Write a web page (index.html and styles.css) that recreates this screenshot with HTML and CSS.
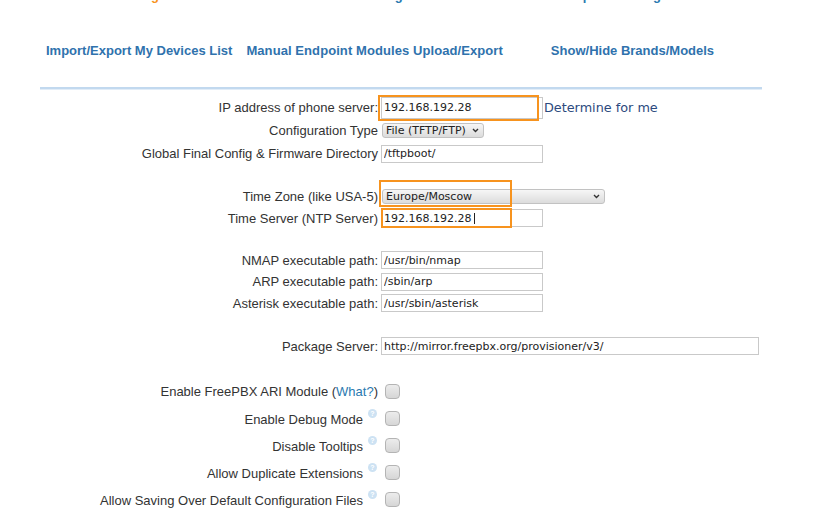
FILE: index.html
```html
<!DOCTYPE html>
<html>
<head>
<meta charset="utf-8">
<link rel="stylesheet" href="styles.css">
</head>
<body>
<div class="tabs">
  <span class="tab active t1">Settings</span>
  <span class="tab t2">Brand Manager</span>
  <span class="tab t3">Template Manager</span>
</div>
<div class="links">
  <a class="link l1">Import/Export My Devices List</a>
  <a class="link l2">Manual Endpoint Modules Upload/Export</a>
  <a class="link l3">Show/Hide Brands/Models</a>
</div>
<div class="rule"></div>
<div class="form">
  <div class="row r23">
    <label>IP address of phone server:</label>
    <div class="field">
      <input class="txt tall" value="192.168.192.28">
      <span class="mark m-ip"></span>
      <a class="determine">Determine for me</a>
    </div>
  </div>
  <div class="row r23">
    <label>Configuration Type</label>
    <div class="field">
      <div class="sel sel-small"><span>File (TFTP/FTP)</span><svg width="7" height="5" viewBox="0 0 7 5"><path d="M1 1 L3.5 3.5 L6 1" fill="none" stroke="#333" stroke-width="1.4"/></svg></div>
    </div>
  </div>
  <div class="row r23">
    <label>Global Final Config &amp; Firmware Directory</label>
    <div class="field"><input class="txt" value="/tftpboot/"></div>
  </div>
  <div class="spacer s20"></div>
  <div class="row">
    <label>Time Zone (like USA-5)</label>
    <div class="field">
      <div class="sel sel-wide"><span>Europe/Moscow</span><svg width="7" height="5" viewBox="0 0 7 5"><path d="M1 1 L3.5 3.5 L6 1" fill="none" stroke="#333" stroke-width="1.4"/></svg></div>
      <span class="mark m-tz"></span>
    </div>
  </div>
  <div class="row">
    <label>Time Server (NTP Server)</label>
    <div class="field">
      <input class="txt" value="192.168.192.28">
      <span class="caret"></span>
      <span class="mark m-ts"></span>
    </div>
  </div>
  <div class="spacer s20"></div>
  <div class="row">
    <label>NMAP executable path:</label>
    <div class="field"><input class="txt" value="/usr/bin/nmap"></div>
  </div>
  <div class="row r215">
    <label>ARP executable path:</label>
    <div class="field"><input class="txt" value="/sbin/arp"></div>
  </div>
  <div class="row r215">
    <label>Asterisk executable path:</label>
    <div class="field"><input class="txt" value="/usr/sbin/asterisk"></div>
  </div>
  <div class="spacer s21"></div>
  <div class="row">
    <label>Package Server:</label>
    <div class="field"><input class="txt long" value="http://mirror.freepbx.org/provisioner/v3/"></div>
  </div>
  <div class="spacer s205"></div>
  <div class="row cb">
    <label>Enable FreePBX ARI Module (<a class="what">What?</a>)</label>
    <div class="field"><span class="check"></span></div>
  </div>
  <div class="row cb">
    <label>Enable Debug Mode<span class="help">?</span></label>
    <div class="field"><span class="check"></span></div>
  </div>
  <div class="row cb">
    <label>Disable Tooltips<span class="help">?</span></label>
    <div class="field"><span class="check"></span></div>
  </div>
  <div class="row cb">
    <label>Allow Duplicate Extensions<span class="help">?</span></label>
    <div class="field"><span class="check"></span></div>
  </div>
  <div class="row cb">
    <label>Allow Saving Over Default Configuration Files<span class="help">?</span></label>
    <div class="field"><span class="check"></span></div>
  </div>
</div>
</body>
</html>
```
FILE: styles.css
```css
html, body {
  margin: 0;
  padding: 0;
  background: #fff;
  overflow: hidden;
}
body {
  font-family: "Liberation Sans", Arial, sans-serif;
  font-size: 13px;
  color: #333;
}

.tabs {
  display: flex;
  margin-top: -12px;
  height: 15px;
  line-height: 15px;
  font-weight: bold;
  font-size: 13px;
  color: #2a7ab0;
  white-space: nowrap;
}
.tab.active { color: #f7941d; }
.t1 { margin-left: 115px; }
.t2 { margin-left: 154px; }
.t3 { margin-left: 142px; word-spacing: 3px; }

.links {
  display: flex;
  margin-top: 40px;
  line-height: 15px;
  font-weight: bold;
  font-size: 13px;
  white-space: nowrap;
}
.link { color: #2f72ad; }
.l1 { margin-left: 46px; }
.l2 { margin-left: 14px; letter-spacing: 0.08px; }
.l3 { margin-left: 48px; }

.rule {
  margin: 29px 0 0 40px;
  width: 722px;
  height: 2px;
  background: #c2d9ef;
  box-shadow: 0 1px 0 #e2edf8;
}

.form {
  margin-top: 7px;
}
.row {
  display: grid;
  grid-template-columns: 378px auto;
  column-gap: 3px;
  align-items: center;
  height: 22px;
}
.row.r23 { height: 23px; }
.row.r215 { height: 21.5px; }
.row.cb { height: 27px; }
.row label {
  text-align: right;
  white-space: nowrap;
  line-height: 15px;
}
.spacer.s20 { height: 20px; }
.spacer.s21 { height: 21px; }
.spacer.s205 { height: 20.5px; }

.field {
  position: relative;
  display: flex;
  align-items: center;
}

.txt {
  box-sizing: border-box;
  width: 162px;
  height: 18px;
  margin: 0;
  padding: 0 2px;
  border: 1px solid #c9c9c9;
  background: #fff;
  font-family: "DejaVu Sans", sans-serif;
  font-size: 11px;
  color: #222;
  outline: none;
}
.txt.tall { height: 22px; }
.txt.long { width: 378px; }

.determine {
  margin-left: 1px;
  font-family: "DejaVu Sans", sans-serif;
  font-size: 12.8px;
  color: #2c4a7e;
}

.sel {
  box-sizing: border-box;
  display: flex;
  align-items: center;
  justify-content: space-between;
  height: 15px;
  margin-left: 1px;
  padding: 0 4px 0 3px;
  border: 1px solid #c2c2c2;
  border-radius: 3px;
  background: linear-gradient(#f6f6f6, #dcdcdc);
  font-family: "DejaVu Sans", sans-serif;
  font-size: 11px;
  color: #222;
  line-height: 13px;
}
.sel-small { width: 102px; }
.sel-wide { width: 223px; }

.mark {
  position: absolute;
  box-sizing: border-box;
  border: 2px solid #f7931e;
  pointer-events: none;
}
.m-ip { left: -3px; top: -2px; width: 161px; height: 26px; }
.m-tz { left: -2px; top: -9px; width: 133px; height: 27px; }
.m-ts { left: 0; top: -1px; width: 131px; height: 20px; }

.caret {
  position: absolute;
  left: 93px;
  top: 4px;
  width: 1px;
  height: 11px;
  background: #222;
}

.what { color: #2a7ab0; }

.help {
  display: inline-block;
  width: 9px;
  height: 9px;
  margin-left: 5px;
  margin-right: 1px;
  border-radius: 50%;
  background: #cde2f3;
  color: #fff;
  font-size: 7px;
  font-weight: bold;
  line-height: 9px;
  text-align: center;
  vertical-align: 8px;
}

.check {
  box-sizing: border-box;
  display: block;
  width: 15px;
  height: 15px;
  margin-left: 4px;
  border: 1px solid #b4b4b4;
  border-radius: 4px;
  background: linear-gradient(#ececec, #d6d6d6);
}
```
